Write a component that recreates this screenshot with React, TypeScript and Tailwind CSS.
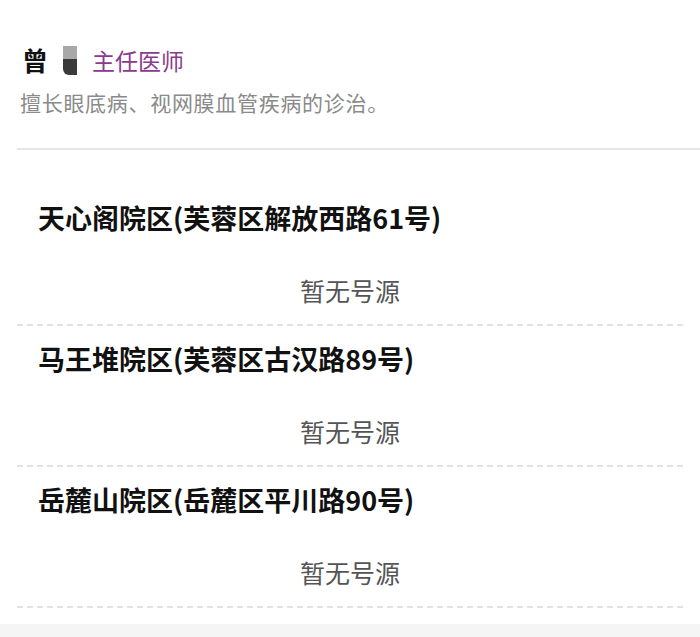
import React from "react";

const campuses = [
  "天心阁院区(芙蓉区解放西路61号)",
  "马王堆院区(芙蓉区古汉路89号)",
  "岳麓山院区(岳麓区平川路90号)",
];

export default function App() {
  return (
    <div
      className="w-[700px] h-[637px] bg-white flex flex-col overflow-hidden"
      style={{ fontFamily: '"Noto Sans CJK SC", "Noto Sans", sans-serif' }}
    >
      <div className="pl-[20px] pt-[42px]">
        <div className="flex items-center h-[36px]">
          <span className="text-[26px] leading-none font-bold text-[#111] ml-[2px]">曾</span>
          <div className="ml-[15px] w-[14px] h-[29px] flex flex-col rounded-bl-[6px] overflow-hidden">
            <div className="h-[13px] bg-[#a8a8a8]" />
            <div className="flex-1 bg-[#3a3a3a]" />
          </div>
          <span className="ml-[15px] text-[23px] leading-none text-[#8b3a8c]">主任医师</span>
        </div>
        <div className="mt-[10px] text-[21px] leading-[28px] text-[#8a8a8a] tracking-[0.7px]">
          擅长眼底病、视网膜血管疾病的诊治。
        </div>
      </div>
      <div className="ml-[17px] mt-[32px] h-[2px] bg-[#e6e6e6]" />
      <div className="flex flex-col">
        {campuses.map((c, i) => (
          <div key={i} className="ml-[17px] mr-[17px]">
            <div
              className={
                "pl-[21px] text-[27px] leading-[36px] font-bold text-[#111] " +
                (i === 0 ? "mt-[50px]" : "mt-[15px]")
              }
            >
              {c}
            </div>
            <div className="mt-[38px] text-[25px] leading-[32px] text-[#555] text-center">
              暂无号源
            </div>
            <div className="mt-[18px] border-t-[2px] border-dashed border-[#e2e2e2]" />
          </div>
        ))}
      </div>
      <div className="mt-[16px] flex-1 bg-[#f5f5f5]" />
    </div>
  );
}
